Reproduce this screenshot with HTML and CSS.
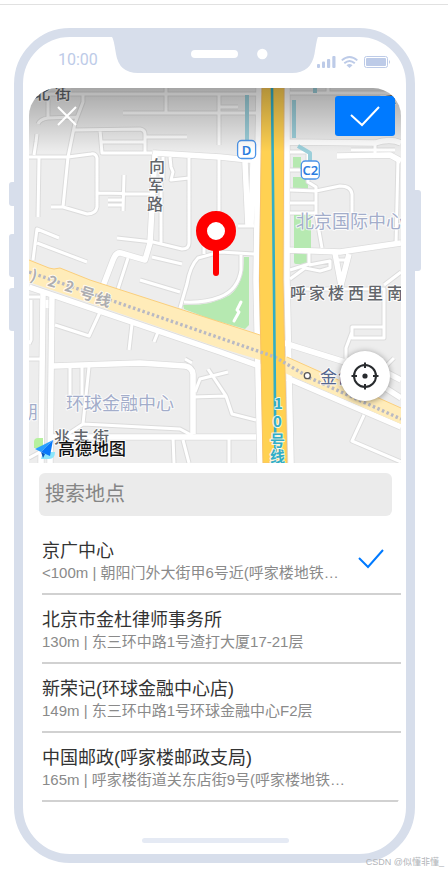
FILE: index.html
```html
<!DOCTYPE html>
<html lang="zh-CN">
<head>
<meta charset="utf-8">
<meta name="viewport" content="width=device-width, initial-scale=1">
<title>选择地点</title>
<link rel="stylesheet" href="styles.css">
</head>
<body>
<main class="page">
  <div class="phone">
    <span class="key key-mute"></span>
    <span class="key key-up"></span>
    <span class="key key-down"></span>
    <span class="key key-power"></span>

    <header class="status">
      <span class="time">10:00</span>
      <svg class="notch" viewBox="112 37 206 36" aria-hidden="true">
        <path d="M112 37H318Q317 38 314.500 54Q311 73 292 73H138Q119 73 116 54Q113.500 38 112 37Z" fill="#d7deeb"/>
        <rect x="191" y="50" width="47" height="8" rx="4" fill="#fff"/>
        <circle cx="262.300" cy="54" r="5.200" fill="#fff"/>
      </svg>
      <svg class="signals" viewBox="318 55 74 14" aria-hidden="true">
        <g fill="#bdcbe8">
          <rect x="317" y="64" width="3" height="4" rx="1"/>
          <rect x="322" y="61.500" width="3" height="6.500" rx="1"/>
          <rect x="327" y="59" width="3.200" height="9" rx="1"/>
          <rect x="332.300" y="56" width="3.200" height="12" rx="1"/>
          <path d="M346.500 65.200Q349.500 62.700 352.500 65.200L349.500 68Z"/>
          <rect x="366" y="58" width="20" height="8" rx="1"/>
          <path d="M389 60Q391 62 389 64Z"/>
        </g>
        <g fill="none" stroke="#bdcbe8">
          <path d="M341.800 60.400Q349.500 53.500 357.300 60.400M344.300 63.200Q349.500 58.700 354.800 63.200" stroke-width="1.900"/>
          <rect x="364.500" y="56.500" width="23" height="11" rx="2"/>
        </g>
      </svg>
    </header>

    <div class="screen">
      <section class="map" aria-label="地图">
        <svg class="map-art" viewBox="29 88 372 375" preserveAspectRatio="xMidYMid slice" aria-hidden="true">
          <defs>
            <path id="lanes" d="M29 94H262M48 94V118M38 124Q40 119 48 118L77 117M83 94V102L75 123L68 157L63 207L87 214Q96 214 97 207V158Q96 153 91 154L68 157H29M166 88V112M123 113H262M74 130L140 129Q145 130 145 134V152M100 130L102 153H152M101 142H145M145 137H187M37 134L36 142L34 155M39 158L38 217M51 207H63M124 175L123 211M97 193L152 194M108 200H123M108 205H123M33 260L37 229L59 238M37 243L87 262M117 238L153 242L182 249Q189 249 189 243V158M152 257L182 264M163 157V180M170 157L171 167L173 172L171 180L189 178M161 160V243M128 258L117 292M204 247V254M254 254L220 252L198 258Q190 266 187 284L180 308M140 280L180 292M184 302Q205 303 220 297Q238 290 241 270V254M219 94V145M219 107H238M219 158V252M238 226H254M290 93H401M328 88V93M351 150H395M375 143V155M290 152H307M290 170H300M308 153V182L316 187V214L322 248M290 190L316 191L340 186Q351 186 352 194V214M290 203H316M290 213H316M398 158L396 245M309 250V264L290 270M290 279L305 268L320 271L330 268V261L309 265M337 260H346M29 297H40M31 300V340L29 344M29 359H40M47 300V308M55 325L89 336L101 310M132 324L129 350M158 332L154 342M185 359L192 363M70 367V395M82 367V395M89 367L83 424L65 436M83 424L180 429L193 436M193 397L226 396L232 414L256 420M208 369L226 396M195 392L200 379L228 372M173 437L174 463M183 440L189 463M229 437V463M290 289H384V338H352V327H384M352 332L346 348V362M384 285L401 272M386 366L394 358M364 415L352 441L401 462M29 458L40 452"/>
            <path id="streets" d="M153 153L220 157L258 161M155 154L150 243L145 260L121 253Q116 252 113 260L103 286M245 162L248 226M253 162L251 226M288 142L375 143Q390 138 401 143M337 156L390 155L401 161M288 250L340 252L401 243M335 253L341 285L349 254M43 293L41 463M52 295L50 463M53 366L140 363L185 366Q192 367 193 374V434M53 437H256M29 287L220 352L262 367M287 378L401 427M284 343L345 362L401 398M370 364L401 380M259 88L256 280L260 463M287 88V280L291 463"/>
          </defs>
          <rect x="29" y="88" width="372" height="375" fill="#ededed"/>
          <g fill="#b6e9b1">
            <rect x="293" y="157" width="8" height="12"/>
            <rect x="293" y="177" width="15" height="12"/>
            <rect x="294" y="252" width="14" height="12" rx="2"/>
            <path d="M249 257V325L245 329L210 319L184 309L183 305Q212 306 230 295Q244 284 244 257Z"/>
          </g>
          <g fill="none" stroke-linejoin="round">
            <use href="#lanes" stroke="#dcdcdc" stroke-width="5"/>
            <use href="#streets" stroke="#dcdcdc" stroke-width="7"/>
            <use href="#lanes" stroke="#fff" stroke-width="3"/>
            <use href="#streets" stroke="#fff" stroke-width="5.500"/>
            <path d="M241 302L237 310L239 312L234 321" stroke="#fff" stroke-width="3" stroke-linecap="round"/>
            <path d="M247 95V141M294 100V138M315 88V93" stroke="#9ccfda" stroke-width="4"/>
            <path d="M298 146L310 153V163" stroke="#9ccfda" stroke-width="4"/>
          </g>
          <rect x="294" y="215" width="17" height="33" fill="#b6e9b1"/>
          <path d="M29 260L49 268L54 269L60 268L90 280L220 322L260 335L285 356L401 408V424L287 374L260 360L220 348L29 282Z" fill="#ffecb9"/>
          <path d="M29 260L49 268L54 269L60 268L90 280L220 322L260 335M287 357L401 408" fill="none" stroke="#fbcf7c"/>
          <path d="M262 88H284L283 280L287 463H263L259.500 280Z" fill="#ffd152" stroke="#f9c364" stroke-width="1"/>
          <path d="M29 272L113 301L220 338L275 357L310 378L401 419" fill="none" stroke="#b9b9c3" stroke-width="3.400" stroke-dasharray="2.500 2.500"/>
          <path d="M272 88L274 290L275.500 463" fill="none" stroke="#32aec6" stroke-width="2.600"/>

          <g class="label road">
            <text x="34 55" y="99">北街</text>
            <text x="149 148 147" y="172 191 210">向军路</text>
            <text x="290 309 328 348 367 387" y="299">呼家楼西里南</text>
            <text x="54 73 93" y="443">兆丰街</text>
            <text x="380" y="108">呼</text>
          </g>
          <g class="label line22">
            <text x="31" y="281" transform="rotate(17 34 276)">)</text>
            <text x="48" y="287" transform="rotate(17 52 282)">2</text>
            <text x="65" y="292" transform="rotate(17 69 287)">2</text>
            <text x="80" y="299" transform="rotate(17 87 293)">号</text>
            <text x="96" y="305" transform="rotate(17 103 299)">线</text>
          </g>
          <g class="label line10">
            <text x="274 273 270 270" y="409 427 446 462">10号线</text>
          </g>
          <g class="label place">
            <text x="296" y="228">北京国际中心</text>
            <text x="66" y="410">环球金融中心</text>
            <text x="20" y="419">朋</text>
          </g>
          <g class="label station"><text x="320" y="383">金台</text></g>
          <circle cx="307.300" cy="375.700" r="3" fill="#fff" stroke="#555" stroke-width="1.300"/>
          <g stroke="#4c94e8" stroke-width="1.300" fill="#fff">
            <rect x="237.600" y="140.500" width="18" height="18" rx="4"/>
            <rect x="301.300" y="161" width="18" height="18" rx="4"/>
          </g>
          <g class="exit"><text x="246.600" y="154.500">D</text><text x="310.300" y="175">C2</text></g>
          <path d="M43 438H38Q34 438 34 442V448H43Z" fill="#b6f19e"/>
          <path d="M43 452H55Q55 459 49 459H41Z" fill="#8be6fb"/>
          <path d="M53 440L35 449L41 452Z" fill="#28a0ff"/>
          <path d="M53 440L41 452L50 456Z" fill="#0878f9"/>
          <path d="M41 452L43 458L45 454Z" fill="#0756bd"/>
          <g class="label brand"><text x="58" y="455">高德地图</text></g>
          <g>
            <path d="M216 248V273" stroke="#f00" stroke-width="6" stroke-linecap="round"/>
            <circle cx="216" cy="231" r="14.500" fill="#fff" stroke="#f00" stroke-width="11"/>
          </g>
        </svg>
        <div class="map-tools">
          <button class="close" type="button" aria-label="关闭">
            <svg viewBox="0 0 20 20"><path d="M1 1L19 19M19 1L1 19"/></svg>
          </button>
          <button class="confirm" type="button" aria-label="确定">
            <svg viewBox="0 0 30 22"><path d="M1 10L12 20L29 2"/></svg>
          </button>
        </div>
        <button class="locate" type="button" aria-label="定位">
          <svg viewBox="0 0 28 28"><circle cx="14" cy="14" r="11"/><path d="M14 .5V6M14 22V27.500M.5 14H6M22 14H27.500"/><circle class="dot" cx="14" cy="14" r="2.600"/></svg>
        </button>
      </section>

      <input class="search" type="search" placeholder="搜索地点" aria-label="搜索地点">

      <ul class="places">
        <li class="item">
          <div class="info"><h2>京广中心</h2><p>&lt;100m | 朝阳门外大街甲6号近(呼家楼地铁站旁)</p></div>
          <svg class="tick" viewBox="0 0 26 20" aria-label="已选"><path d="M1 9L10 18L25 1"/></svg>
        </li>
        <li class="item">
          <div class="info"><h2>北京市金杜律师事务所</h2><p>130m | 东三环中路1号渣打大厦17-21层</p></div>
        </li>
        <li class="item">
          <div class="info"><h2>新荣记(环球金融中心店)</h2><p>149m | 东三环中路1号环球金融中心F2层</p></div>
        </li>
        <li class="item">
          <div class="info"><h2>中国邮政(呼家楼邮政支局)</h2><p>165m | 呼家楼街道关东店街9号(呼家楼地铁站旁)</p></div>
        </li>
      </ul>
    </div>
    <div class="home"></div>
  </div>
  <small class="credit">CSDN @似懂非懂_</small>
</main>
</body>
</html>
```
FILE: styles.css
```css
* { box-sizing: border-box; }

body {
  margin: 0;
  background: #fff;
  font-family: "Liberation Sans", "Noto Sans CJK SC", sans-serif;
}

button { border: 0; padding: 0; cursor: pointer; }

.page {
  position: relative;
  min-height: 100vh;
  padding: 28px 33px 10px 14px;
  background: linear-gradient(#e1e1e1, #e1e1e1) 0 4px / 100% 1px no-repeat;
}

.phone {
  position: relative;
  border: 9px solid #d7deeb;
  border-radius: 56px;
  padding: 0 5px 11px 6px;
}

/* Hardware keys on the phone's edges */
.key {
  position: absolute;
  left: -14px;
  width: 5px;
  height: 43px;
  border-radius: 3px 0 0 3px;
  background: #d7deeb;
}
.key-mute { top: 145px; height: 24px; }
.key-up { top: 197px; }
.key-down { top: 251px; }
.key-power {
  top: 153px;
  left: auto;
  right: -15px;
  width: 6px;
  height: 81px;
  border-radius: 0 3px 3px 0;
}

.status {
  display: grid;
  grid-template-columns: 1fr 206px 1fr;
  height: 51px;
}
.time {
  padding: 13px 0 0 29px;
  font: 16px/20px Roboto, sans-serif;
  color: #bdcbe8;
}
.notch { width: 206px; height: 36px; }
.signals { width: 74px; height: 14px; margin-top: 18px; overflow: visible; }

.screen { border-radius: 28px; overflow: hidden; }

.map { position: relative; height: 375px; }
.map-art { display: block; width: 100%; height: 100%; }

.label {
  font-family: "Noto Sans CJK SC", sans-serif;
  stroke: #fff;
  stroke-width: 2px;
  stroke-opacity: 0.8;
  stroke-linejoin: round;
  paint-order: stroke;
}
.road { font-size: 16px; font-weight: 500; fill: #63666b; }
.line22 { font-size: 15px; font-weight: 700; fill: #adadb0; }
.line10 { font-size: 15px; font-weight: 700; fill: #32aec6; }
.place { font-size: 18px; fill: #a3adca; }
.station { font-size: 17px; fill: #55678f; }
.brand { font-size: 17px; font-weight: 500; fill: #111; }
.exit {
  font: 600 13px "Noto Sans", sans-serif;
  fill: #2b7de0;
  text-anchor: middle;
}

.map-tools {
  position: absolute;
  inset: 0 0 auto;
  display: flex;
  justify-content: space-between;
  height: 64px;
  padding: 8px 6px 0 28px;
  background: linear-gradient(rgba(0, 0, 0, 0.3), rgba(0, 0, 0, 0));
}
.map-tools svg { fill: none; stroke: #fff; stroke-width: 2; display: block; margin: 0 auto; }
.close { width: 20px; height: 40px; background: none; }
.close svg { width: 20px; height: 20px; }
.confirm { width: 60px; height: 40px; border-radius: 3px; background: #007aff; }
.confirm svg { width: 30px; height: 22px; }

.locate {
  position: absolute;
  right: 11px;
  bottom: 62px;
  display: grid;
  place-items: center;
  width: 50px;
  height: 50px;
  border-radius: 50%;
  background: #fff;
  box-shadow: 0 1px 6px rgba(0, 0, 0, 0.4);
}
.locate svg { width: 28px; height: 28px; fill: none; stroke: #282b2e; stroke-width: 2; }
.locate .dot { fill: #282b2e; stroke: none; }

.search {
  display: block;
  width: calc(100% - 19px);
  height: 43px;
  margin: 10px 9px 10px 10px;
  padding: 0 6px;
  border: 0;
  border-radius: 6px;
  background: #ebebeb;
  font: 20px/24px "Liberation Sans", "Noto Sans CJK SC", sans-serif;
  appearance: none;
}
.search::placeholder { color: #858585; opacity: 1; }

.places { list-style: none; margin: 0; padding: 0 0 15px 13px; }
.item {
  display: flex;
  align-items: center;
  padding: 14px 0 9px;
  border-bottom: 2px solid #d1d1d1;
}
.info { flex: 1; min-width: 0; padding-right: 54px; }
.info h2, .info p {
  margin: 0;
  overflow: hidden;
  white-space: nowrap;
  text-overflow: ellipsis;
  line-height: 22px;
}
.info h2 { font-size: 18px; font-weight: 400; color: #333; }
.info p { font-size: 15px; color: #8a8a8a; }
.tick { width: 26px; height: 20px; margin: 0 17px 6px -43px; fill: none; stroke: #007aff; stroke-width: 2; }

.home {
  width: 147px;
  height: 5px;
  margin: 21px auto 0;
  border-radius: 3px;
  background: #e5eaf4;
}

.credit {
  position: absolute;
  right: 4px;
  bottom: 4px;
  font-size: 9px;
  line-height: 14px;
  color: #b2b5ba;
}
```
